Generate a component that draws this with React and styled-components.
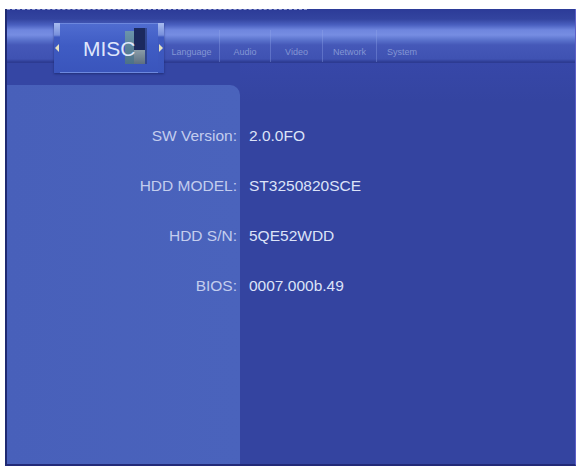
import React from "react";
import styled, { createGlobalStyle } from "styled-components";

const Global = createGlobalStyle`
  html, body { margin: 0; padding: 0; background: #ffffff; }
  body { font-family: "Liberation Sans", Arial, sans-serif; }
`;

const Screen = styled.div`
  margin: 9px 0 0 5px;
  width: 571px;
  height: 457px;
  box-sizing: border-box;
  display: flex;
  flex-direction: column;
  background: #3545a2;
  border-left: 2px solid #1f2a72;
  border-right: 1px solid #5c60c8;
  border-bottom: 2px solid #222a78;
  overflow: hidden;
  position: relative;
`;

const TopBar = styled.div`
  position: relative;
  z-index: 2;
  height: 54px;
  flex: none;
  display: flex;
  align-items: flex-start;
  padding: 14px 0 0 47px;
  box-sizing: border-box;
  background: linear-gradient(
    to bottom,
    #2c3b98 0px,
    #33449f 10px,
    #4a60c0 16px,
    #6f86de 21px,
    #768de2 26px,
    #5a72cc 31px,
    #4558b8 36px,
    #3f52b2 50px,
    #2d3b92 53px,
    #2d3b92 54px
  );
  &::before {
    content: "";
    position: absolute;
    left: 0;
    top: 0;
    width: 300px;
    border-top: 1px dashed rgba(230, 235, 255, 0.55);
  }
`;

const ActiveTab = styled.div`
  position: relative;
  width: 110px;
  height: 50px;
  flex: none;
  box-sizing: border-box;
  display: flex;
  align-items: center;
  background: linear-gradient(to bottom, #4f6cd0 0%, #3f5cc4 45%, #3a55bc 100%);
  border: 1px solid #6d88de;
  box-shadow: 0 1px 2px rgba(20, 30, 90, 0.6);
`;

const Cap = styled.div`
  position: absolute;
  top: -1px;
  bottom: -1px;
  width: 6px;
  ${(p) => (p.$side === "left" ? "left: -1px;" : "right: -1px;")}
  background: linear-gradient(to bottom, #a8bcf0 0px, #7890dc 12px, #3f5ac0 14px, #3a55bc 100%);
  display: flex;
  align-items: center;
  justify-content: center;
`;

const Arrow = styled.span`
  display: block;
  width: 0;
  height: 0;
  border-top: 4px solid transparent;
  border-bottom: 4px solid transparent;
  ${(p) =>
    p.$dir === "left"
      ? "border-right: 4px solid #e6e2c0;"
      : "border-left: 4px solid #e6e2c0;"}
`;

const BoxIcon = styled.svg`
  position: absolute;
  left: 70px;
  top: 4px;
`;

const TabTitle = styled.span`
  position: relative;
  margin-left: 28px;
  font-size: 21px;
  color: #dfe6fb;
  letter-spacing: 0;
  line-height: 1;
`;

const TabList = styled.div`
  display: flex;
  margin-top: 7px;
  height: 32px;
`;

const TabItem = styled.div`
  width: ${(p) => p.$w}px;
  display: flex;
  align-items: flex-end;
  justify-content: center;
  padding-bottom: 5px;
  box-sizing: border-box;
  font-size: 9px;
  color: #8496d4;
  border-right: ${(p) => (p.$sep ? "1px solid rgba(150, 170, 235, 0.35)" : "none")};
`;

const Body = styled.div`
  flex: 1;
  display: flex;
  background: #3546a4;
`;

const Panel = styled.div`
  width: 233px;
  margin-top: 22px;
  flex: none;
  background: linear-gradient(to right, #4860ba, #4a63bc);
  border-top-right-radius: 10px;
  padding: 26px 3px 0 0;
  box-sizing: border-box;
  display: flex;
  flex-direction: column;
  align-items: flex-end;
`;

const Values = styled.div`
  flex: 1;
  padding: 48px 0 0 9px;
  background: linear-gradient(to bottom, #3747a8 0px, #3444a0 40px, #3444a0 100%);
  display: flex;
  flex-direction: column;
`;

const Row = styled.div`
  height: 50px;
  display: flex;
  align-items: center;
  font-size: 15.5px;
  color: ${(p) => (p.$value ? "#dce3f8" : "#c3cdee")};
  white-space: nowrap;
`;

const info = [
  ["SW Version:", "2.0.0FO"],
  ["HDD MODEL:", "ST3250820SCE"],
  ["HDD S/N:", "5QE52WDD"],
  ["BIOS:", "0007.000b.49"],
];

const tabs = [
  ["Language", 56],
  ["Audio", 51],
  ["Video", 52],
  ["Network", 54],
  ["System", 50],
];

export default function App() {
  return (
    <>
      <Global />
      <Screen>
        <TopBar>
          <ActiveTab>
            <Cap $side="left">
              <Arrow $dir="left" />
            </Cap>
            <BoxIcon width="22" height="38" viewBox="0 0 22 38">
              <defs>
                <linearGradient id="boxL" x1="0" y1="0" x2="0" y2="1">
                  <stop offset="0" stopColor="#6f9aa8" />
                  <stop offset="1" stopColor="#4e7482" />
                </linearGradient>
                <linearGradient id="boxB" x1="0" y1="0" x2="0" y2="1">
                  <stop offset="0" stopColor="#8a9ca8" />
                  <stop offset="1" stopColor="#5d6f80" />
                </linearGradient>
              </defs>
              <rect x="0" y="3" width="9" height="33" fill="url(#boxL)" opacity="0.9" />
              <rect x="9" y="0" width="11" height="24" fill="#1c2a5e" />
              <rect x="9" y="22" width="11" height="14" fill="url(#boxB)" />
              <rect x="20" y="0" width="2" height="36" fill="#2a3c78" opacity="0.7" />
            </BoxIcon>
            <TabTitle>MISC</TabTitle>
            <Cap $side="right">
              <Arrow $dir="right" />
            </Cap>
          </ActiveTab>
          <TabList>
            {tabs.map(([t, w], i) => (
              <TabItem key={t} $w={w} $sep={i < tabs.length - 1}>
                {t}
              </TabItem>
            ))}
          </TabList>
        </TopBar>
        <Body>
          <Panel>
            {info.map(([l]) => (
              <Row key={l}>{l}</Row>
            ))}
          </Panel>
          <Values>
            {info.map(([l, v]) => (
              <Row key={l} $value>
                {v}
              </Row>
            ))}
          </Values>
        </Body>
      </Screen>
    </>
  );
}
